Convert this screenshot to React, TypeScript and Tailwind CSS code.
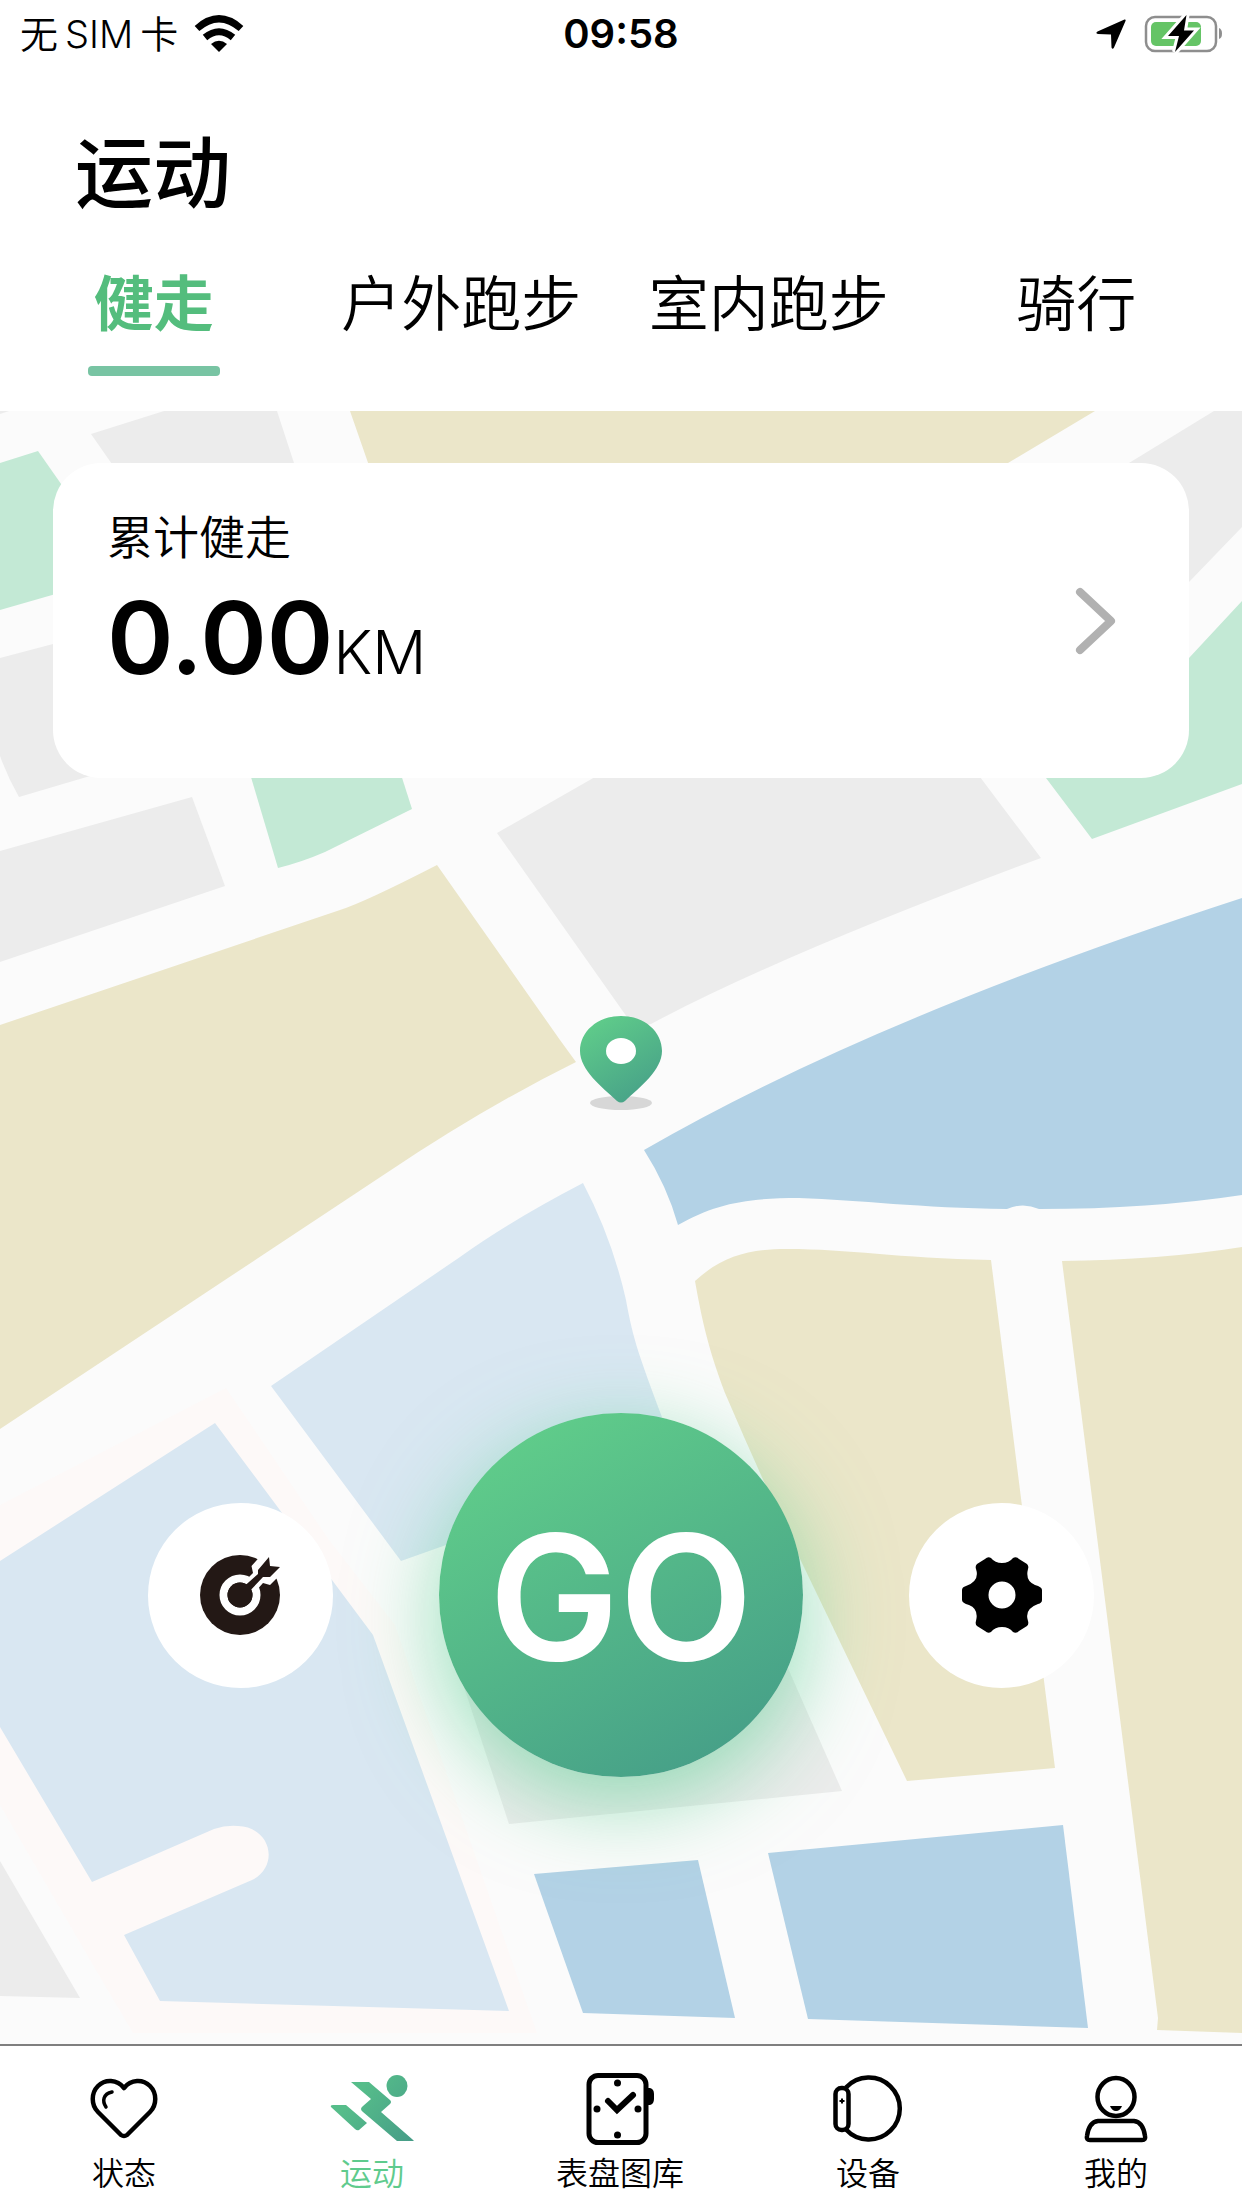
import React from "react";

function MapBackground() {
  return (
    <svg
      className="absolute inset-0 h-full w-full"
      viewBox="0 411 1242 1633"
      preserveAspectRatio="xMidYMid slice"
      aria-hidden="true"
    >
      <defs>
        <linearGradient id="pin" x1="0.2" y1="0" x2="0.8" y2="1">
          <stop offset="0" stopColor="#60cd8a" />
          <stop offset="1" stopColor="#469f88" />
        </linearGradient>
      </defs>
      <rect x="0" y="411" width="1242" height="1633" fill="#fbfbfb" />

      {/* City blocks */}
      <g fill="#ececec">
        <path d="M0 411H9L0 414Z" />
        <path d="M91 434L164 411H277L294 463L300 490H130Z" />
        <path d="M0 658L53 644L110 628V771L90 776L19 797Q8 778 0 756Z" />
        <path d="M0 851L192 797L225 886L0 962Z" />
        <path d="M595 777H980L1041 858Q780 955 651 1024L634 1027L497 833Z" />
        <path d="M1214 411H1242V527L1189 582L1100 600V480L1129 463Z" />
        <path d="M0 1861L80 1998L0 1996Z" />
        <path d="M509 1824L460 1675L780 1650L842 1791Z" />
      </g>

      {/* Parks */}
      <g fill="#c3e9d5">
        <path d="M0 463L38 451L80 511V587L0 610Z" />
        <path d="M240 740H390L412 809L325 852Q302 862 278 868Z" />
        <path d="M1242 601L1189 658L1020 745L1046 778L1092 839L1242 784Z" />
      </g>

      {/* Sand areas */}
      <g fill="#ebe6c9">
        <path d="M350 411H1095L1008 463L980 480H374Z" />
        <path d="M0 1025L340 910Q365 902 437 865L560 1040L576 1062Q485 1107 388 1172L0 1429Z" />
        <path d="M695 1281C722 1256 750 1249 787 1249C850 1249 895 1258 991 1260L1055 1768L907 1781L802 1563Q763 1482 725 1393C708 1348 702 1320 695 1281Z" />
        <path d="M1062 1261Q1160 1260 1242 1247V2033L1157 2030L1158 2018Z" />
      </g>

      {/* Water */}
      <g fill="#b3d2e6">
        <path d="M1242 898Q870 1019 644 1150Q667 1186 678 1225C715 1204 745 1198 799 1198C860 1200 920 1208 1007 1209Q1023 1202 1039 1209Q1150 1209 1242 1195Z" />
        <path d="M534 1874L698 1860L735 2018L583 2013Z" />
        <path d="M768 1853L1063 1825L1088 2028L808 2019Z" />
      </g>
      <path
        fill="#d9e7f2"
        d="M583 1183Q612 1238 626 1300C633 1340 640 1358 662 1417L600 1520L446 1545L401 1561L271 1386L460 1257Q510 1221 583 1183Z"
      />
      <path
        fill="#fdf9f8"
        d="M0 1505L226 1388L329 1540L395 1625L537 2033H133L93 1965L0 1805Z"
      />
      <path
        fill="#d9e7f2"
        d="M0 1561L215 1423L332 1580L373 1635L509 2011L160 2001L124 1935L252 1880C280 1866 271 1827 238 1826Q226 1825 214 1829L92 1882L0 1727Z"
      />

      {/* Current position */}
      <ellipse cx="621" cy="1103" rx="31" ry="7" fill="#d7d7d7" />
      <path
        fill="url(#pin)"
        d="M621 1016C645 1016 662 1032 662 1051C662 1070 640 1087 625 1101Q621 1104 617 1101C602 1087 580 1070 580 1051C580 1032 597 1016 621 1016Z"
      />
      <ellipse cx="621" cy="1051" rx="15" ry="13" fill="#fff" />
    </svg>
  );
}

function StatusBar() {
  return (
    <div className="grid h-[68px] grid-cols-3 items-center px-5">
      <div className="flex items-center gap-4 text-[38px] font-[350] leading-none">
        <span>
          无<span className="mx-[7px]">SIM</span>卡
        </span>
        <svg width="50" height="38" viewBox="0 0 50 38" aria-label="Wi-Fi">
          <g fill="none" stroke="#000" strokeWidth="7">
            <path d="M3 13.500Q25 -6 47 13.500" />
            <path d="M11 22.500Q25 11 39 22.500" />
          </g>
          <path d="M17 29Q25 22.500 33 29L25 37Z" />
        </svg>
      </div>
      <div className="text-center text-[40px] font-semibold leading-none">09:58</div>
      <div className="flex items-center justify-end gap-[18px]">
        <svg width="30" height="30" viewBox="0 0 30 30" aria-label="定位">
          <path d="M28.500 0.500Q30 0 29.500 2L18 28.500Q16.500 31 15.500 28.500L15 15.500L2 15Q-1 14.500 1.500 12.500Z" />
        </svg>
        <svg width="78" height="40" viewBox="2 0 78 40" aria-label="电池">
          <rect x="4" y="3" width="70" height="34" rx="9" fill="#fff" stroke="#8e8e8e" strokeWidth="2.500" />
          <path d="M77 14Q80 15 80 19.500Q80 24 77 25Z" fill="#8e8e8e" />
          <rect x="9" y="8" width="50" height="24" rx="5" fill="#65c466" />
          <path
            d="M44.500 1L26 22H37L33 38L52 16.500H42Z"
            fill="#000"
            stroke="#fff"
            strokeWidth="6"
            paintOrder="stroke"
          />
        </svg>
      </div>
    </div>
  );
}

const sports = ["健走", "户外跑步", "室内跑步", "骑行"];

function SportTabs() {
  return (
    <div role="tablist" className="grid grid-cols-4 pr-3">
      {sports.map((name, i) => (
        <button
          key={name}
          role="tab"
          aria-selected={i === 0}
          className={
            i === 0
              ? "flex flex-col items-center gap-[22px] text-[60px] font-bold leading-[80px] text-[#54bd7d]"
              : "flex flex-col items-center gap-[22px] text-[60px] font-[350] leading-[80px]"
          }
        >
          {name}
          {i === 0 && <span className="h-[10px] w-[132px] rounded bg-[#78c4a3]" />}
        </button>
      ))}
    </div>
  );
}

function TargetIcon() {
  return (
    <svg width="82" height="82" viewBox="0 0 82 82" aria-hidden="true">
      <circle cx="40" cy="41" r="40" fill="#231815" />
      <circle cx="40" cy="41" r="16.500" fill="none" stroke="#fff" strokeWidth="8" />
      <path d="M45 27L53 19L51.500 12L64 -2L88 -2V14L76 25L70 31L63 29L55 38Z" fill="#fff" />
      <path d="M58 16L69 3L70 12L80 13L70 23L63 23L46 41L40 36L58 20Z" fill="#231815" />
      <circle cx="40" cy="41" r="12.500" fill="#231815" />
    </svg>
  );
}

function GearIcon() {
  return (
    <svg width="82" height="82" viewBox="0 0 82 82" aria-hidden="true">
      <path
        fillRule="evenodd"
        d="M24 5Q27 2 30 4Q34 9 41 9Q48 9 52 4Q55 2 58 5L66 10Q68 12 67 15Q64 27 74 31Q81 33 81 36V46Q81 49 77 50Q63 55 67 67Q68 70 66 72L58 77Q55 80 52 78Q48 73 41 73Q34 73 30 78Q27 80 24 77L16 72Q14 70 15 67Q18 55 8 51Q1 49 1 46V36Q1 33 5 32Q19 27 15 15Q14 12 16 10ZM41 27.500A13.500 13.500 0 1 0 41 54.500A13.500 13.500 0 1 0 41 27.500Z"
      />
    </svg>
  );
}

function HeartIcon() {
  return (
    <svg width="84" height="72" viewBox="0 0 84 72" fill="none" stroke="#000" strokeLinecap="round" strokeLinejoin="round" aria-hidden="true">
      <path strokeWidth="4.500" d="M42 15C49 6 61 6 68 13C75 20 75 32 68 39L45 62Q42 64 39 62L16 39C9 32 9 20 16 13C23 6 35 6 42 15Z" />
      <path strokeWidth="3.500" d="M30 19C21 21 20 28 24 34" />
    </svg>
  );
}

function RunnerIcon() {
  return (
    <svg width="84" height="72" viewBox="0 0 84 72" aria-hidden="true">
      <defs>
        <linearGradient id="runner" x1="0" y1="0" x2="84" y2="72" gradientUnits="userSpaceOnUse">
          <stop offset="0.300" stopColor="#56bd8a" />
          <stop offset="1" stopColor="#459b87" />
        </linearGradient>
      </defs>
      <g fill="url(#runner)">
        <ellipse cx="67" cy="13" rx="10.500" ry="11" />
        <path d="M21 9H39L60 27Q62 29 60 31L51 39L82 66L84 68H67L33 39Q29 36 33 33L41 26Z" />
        <path d="M1 34Q0 32 3 32L16 32L37 50L29 57Q27 58 25 56Z" />
      </g>
    </svg>
  );
}

function WatchIcon() {
  return (
    <svg width="84" height="72" viewBox="0 0 84 72" aria-hidden="true">
      <rect x="11" y="2.500" width="57" height="67" rx="9" fill="none" stroke="#000" strokeWidth="5" />
      <path d="M69 15H72Q76 16 76 21V26Q76 31 72 32H69Z" />
      <path d="M30 28L39 37L55 22" fill="none" stroke="#000" strokeWidth="6" strokeLinecap="round" />
      <circle cx="39.500" cy="10" r="3.500" />
      <circle cx="39.500" cy="62" r="3.500" />
      <circle cx="19" cy="36" r="3.500" />
      <circle cx="60" cy="36" r="3.500" />
    </svg>
  );
}

function DeviceIcon() {
  return (
    <svg width="84" height="72" viewBox="0 0 84 72" fill="none" stroke="#000" strokeWidth="4.500" aria-hidden="true">
      <path d="M20 14.500A31 31 0 1 1 20 56.500" />
      <rect x="9.500" y="15" width="13" height="42" rx="6" />
      <path strokeWidth="2" d="M16 25.500V30.500M13.500 28H18.500" />
    </svg>
  );
}

function ProfileIcon() {
  return (
    <svg width="84" height="72" viewBox="0 0 84 72" fill="none" stroke="#000" strokeWidth="4.500" strokeLinejoin="round" aria-hidden="true">
      <ellipse cx="42" cy="24" rx="18.500" ry="19" />
      <path d="M24 48H60Q69 49 71 63Q72 67 68 67H16Q12 67 13 63Q15 49 24 48Z" />
      <path d="M36 33H48Q46 38 42 38Q38 38 36 33Z" fill="#000" stroke="none" />
    </svg>
  );
}

const navItems = [
  { label: "状态", icon: <HeartIcon /> },
  { label: "运动", icon: <RunnerIcon />, active: true },
  { label: "表盘图库", icon: <WatchIcon /> },
  { label: "设备", icon: <DeviceIcon /> },
  { label: "我的", icon: <ProfileIcon /> },
];

export default function App() {
  return (
    <div className="flex min-h-screen flex-col bg-white font-['Inter','Noto_Sans_CJK_SC',sans-serif] text-black">
      <header className="pb-[35px]">
        <StatusBar />
        <h1 className="mt-[50px] mb-[34px] px-[75px] text-[78px] font-medium leading-[112px]">运动</h1>
        <SportTabs />
      </header>

      <main className="relative flex flex-1 flex-col justify-between gap-20 px-[53px] pt-[52px] pb-[267px]">
        <MapBackground />

        <button className="relative flex h-[315px] items-center justify-between rounded-[48px] bg-white pr-[72px] pl-[54px] text-left">
          <span className="flex flex-col self-start pt-[42px]">
            <span className="text-[46px] font-[350] leading-[64px]">累计健走</span>
            <span className="flex items-baseline leading-[136px]">
              <span className="text-[101px] font-semibold">0.00</span>
              <span className="text-[60px] font-[350]">KM</span>
            </span>
          </span>
          <svg width="42" height="68" viewBox="0 0 42 68" fill="none" aria-hidden="true">
            <path d="M5 5L36 34L5 63" stroke="#b1b1b1" strokeWidth="8" strokeLinecap="round" strokeLinejoin="round" />
          </svg>
        </button>

        <div className="relative flex items-center justify-center gap-[106px]">
          <button aria-label="目标" className="flex size-[185px] items-center justify-center rounded-full bg-white">
            <TargetIcon />
          </button>
          <button className="size-[364px] rounded-full bg-linear-[150deg] from-[#60cd8a] from-10% to-[#469f88] to-90% pt-1 text-[174px] font-semibold leading-none text-white shadow-[0_24px_88px_rgba(80,205,140,0.6)]">
            GO
          </button>
          <button aria-label="设置" className="flex size-[185px] items-center justify-center rounded-full bg-white">
            <GearIcon />
          </button>
        </div>
      </main>

      <nav className="grid grid-cols-5 border-t-2 border-[#7f7f7f] pt-[27px] pr-0.5 pb-[11px]">
        {navItems.map(({ label, icon, active }) => (
          <a
            key={label}
            href="#"
            className={
              active
                ? "flex flex-col items-center gap-1.5 text-[32px] font-[350] leading-[46px] text-[#5fcb8d]"
                : "flex flex-col items-center gap-1.5 text-[32px] font-[350] leading-[46px]"
            }
          >
            {icon}
            {label}
          </a>
        ))}
      </nav>
    </div>
  );
}
